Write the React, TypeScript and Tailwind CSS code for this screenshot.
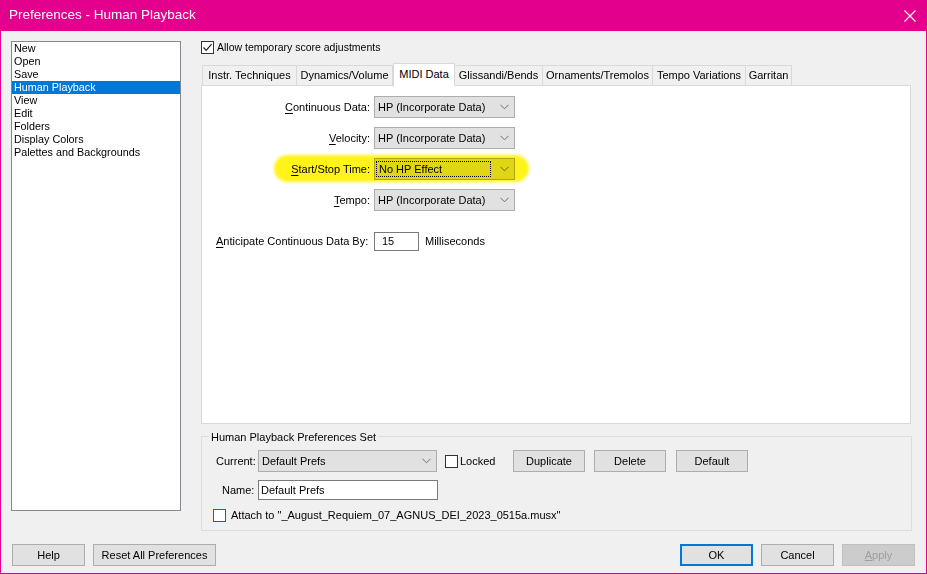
const FONT = { fontFamily: '"Liberation Sans", Arial, sans-serif' };

function Chevron() {
  return (
    <svg width="9" height="6" viewBox="0 0 9 6" className="block">
      <path d="M0.5 0.8 L4.5 4.8 L8.5 0.8" fill="none" stroke="#6d6d6d" strokeWidth="1" />
    </svg>
  );
}

function Combo({ value, w, focused }: { value: string; w: string; focused?: boolean }) {
  return (
    <div className={`flex h-[22px] ${w} items-center whitespace-nowrap border border-[#adadad] bg-[#e1e1e1] pl-[1px] pr-[5px]`}>
      <div className={`flex h-[16px] flex-1 items-center pl-[2px] ${focused ? "border border-dotted border-black" : ""}`}>
        {value}
      </div>
      <div className="ml-[9px]">
        <Chevron />
      </div>
    </div>
  );
}

function Check({ checked, blue }: { checked?: boolean; blue?: boolean }) {
  return (
    <div className={`flex h-[13px] w-[13px] shrink-0 items-center justify-center border bg-white ${blue ? "border-[#2c5d9c]" : "border-[#333333]"}`}>
      {checked && (
        <svg width="11" height="11" viewBox="0 0 11 11">
          <path d="M1.5 5.5 L4.2 8.3 L9.6 2.2" fill="none" stroke="#222" strokeWidth="1.2" />
        </svg>
      )}
    </div>
  );
}

function Btn({ label, w, primary, disabled }: { label: React.ReactNode; w: string; primary?: boolean; disabled?: boolean }) {
  return (
    <div
      className={`flex h-[22px] ${w} items-center justify-center whitespace-nowrap text-[11px] ${
        primary ? "border-2 border-[#0078d7] bg-[#e1e1e1]" : disabled ? "border border-[#bfbfbf] bg-[#cccccc] text-[#9d9d9d]" : "border border-[#adadad] bg-[#e1e1e1]"
      }`}
    >
      {label}
    </div>
  );
}

const tabs = ["Instr. Techniques", "Dynamics/Volume", "MIDI Data", "Glissandi/Bends", "Ornaments/Tremolos", "Tempo Variations", "Garritan"];
const tabW = ["w-[95px]", "w-[97px]", "w-[62px]", "w-[89px]", "w-[111px]", "w-[94px]", "w-[47px]"];

const items = ["New", "Open", "Save", "Human Playback", "View", "Edit", "Folders", "Display Colors", "Palettes and Backgrounds"];

export default function App() {
  const rows = [
    { u: "C", rest: "ontinuous Data:", value: "HP (Incorporate Data)" },
    { u: "V", rest: "elocity:", value: "HP (Incorporate Data)" },
    { u: "S", rest: "tart/Stop Time:", value: "No HP Effect", focused: true },
    { u: "T", rest: "empo:", value: "HP (Incorporate Data)" },
  ];

  return (
    <div className="h-[574px] w-[927px] overflow-hidden bg-[#e3008c] text-[11px] text-black" style={FONT}>
      {/* Title bar */}
      <div className="flex h-[31px] items-center justify-between pl-[9px] pr-[11px] text-white">
        <span className="text-[13.5px]">Preferences - Human Playback</span>
        <svg width="12" height="12" viewBox="0 0 12 12">
          <path d="M0.5 0.5 L11.5 11.5 M11.5 0.5 L0.5 11.5" stroke="white" strokeWidth="1.1" />
        </svg>
      </div>

      {/* Body */}
      <div className="mx-[1px] h-[542px] bg-[#f0f0f0] pl-[10px] pt-[10px]">
        <div className="flex gap-[20px]">
          {/* Category list */}
          <div className="h-[470px] w-[170px] border border-[#828790] bg-white text-[10.8px]">
            {items.map((it) => (
              <div
                key={it}
                className={`h-[13px] whitespace-nowrap pl-[2px] leading-[13px] ${it === "Human Playback" ? "bg-[#0078d7] text-white" : ""}`}
              >
                {it}
              </div>
            ))}
          </div>

          {/* Right side */}
          <div className="relative w-[711px] whitespace-nowrap">
            <div className="flex h-[13px] items-center gap-[3px]">
              <Check checked />
              <span className="text-[10.5px]">Allow temporary score adjustments</span>
            </div>

            {/* Tabs */}
            <div className="mt-[9px] flex h-[22px] items-end pl-[1px]">
              {tabs.map((t, i) => (
                <div
                  key={t}
                  className={`flex items-center justify-center border-t border-l border-r border-[#d9d9d9] text-[11px] ${tabW[i]} ${
                    t === "MIDI Data" ? "relative z-10 -mb-[1px] h-[23px] bg-white pb-[2px]" : "h-[20px] bg-[#f0f0f0] -ml-[1px] first:ml-0"
                  }`}
                >
                  {t}
                </div>
              ))}
            </div>

            {/* Tab panel */}
            <div className="h-[339px] w-[710px] border border-[#d9d9d9] bg-white pt-[10px] text-[11px]">
              <div className="flex flex-col gap-[9px]">
                {rows.map((r) => (
                  <div key={r.rest} className="flex items-center">
                    <div className="w-[168px] text-right">
                      <span className="underline underline-offset-2">{r.u}</span>
                      {r.rest}
                    </div>
                    <div className="ml-[4px]">
                      <Combo value={r.value} w="w-[141px]" focused={r.focused} />
                    </div>
                  </div>
                ))}
              </div>
              <div className="mt-[21px] flex items-center pl-[14px]">
                <span className="w-[158px]">
                  <span className="underline underline-offset-2">A</span>nticipate Continuous Data By:
                </span>
                <div className="flex h-[19px] w-[45px] items-center border border-[#7a7a7a] bg-white pl-[7px]">15</div>
                <span className="ml-[6px]">Milliseconds</span>
              </div>
            </div>

            {/* Group box */}
            <div className="relative mt-[12px] h-[95px] w-[711px] border border-[#dcdcdc] text-[11px]">
              <div className="absolute -top-[8px] left-[7px] bg-[#f0f0f0] px-[2px]">Human Playback Preferences Set</div>
              <div className="flex items-center pl-[14px] pt-[13px]">
                <span className="w-[42px]">Current:</span>
                <Combo value="Default Prefs" w="w-[179px]" />
                <div className="ml-[8px] flex w-[68px] items-center gap-[2px]">
                  <Check />
                  <span>Locked</span>
                </div>
                <div className="flex gap-[9px]">
                  <Btn label="Duplicate" w="w-[72px]" />
                  <Btn label="Delete" w="w-[72px]" />
                  <div className="ml-[1px]">
                    <Btn label="Default" w="w-[72px]" />
                  </div>
                </div>
              </div>
              <div className="mt-[8px] flex items-center pl-[20px]">
                <span className="w-[36px]">Name:</span>
                <div className="flex h-[20px] w-[180px] items-center border border-[#7a7a7a] bg-white pl-[2px]">Default Prefs</div>
              </div>
              <div className="mt-[7px] flex items-center gap-[5px] pl-[11px]">
                <Check blue />
                <span>Attach to "_August_Requiem_07_AGNUS_DEI_2023_0515a.musx"</span>
              </div>
            </div>

            {/* Yellow highlighter */}
            <div className="pointer-events-none absolute left-[73px] top-[114px] h-[27px] w-[255px] rounded-[14px] bg-[#fff200] opacity-90 mix-blend-multiply blur-[1.5px]" />
          </div>
        </div>

        {/* Bottom buttons */}
        <div className="mt-[13px] flex items-center pl-[1px] pr-[11px]">
          <Btn label="Help" w="w-[73px]" />
          <div className="ml-[8px]">
            <Btn label="Reset All Preferences" w="w-[123px]" />
          </div>
          <div className="ml-auto flex gap-[8px]">
            <Btn label="OK" w="w-[73px]" primary />
            <Btn label="Cancel" w="w-[73px]" />
            <Btn label={<span><span className="underline">A</span>pply</span>} w="w-[73px]" disabled />
          </div>
        </div>
      </div>
    </div>
  );
}
